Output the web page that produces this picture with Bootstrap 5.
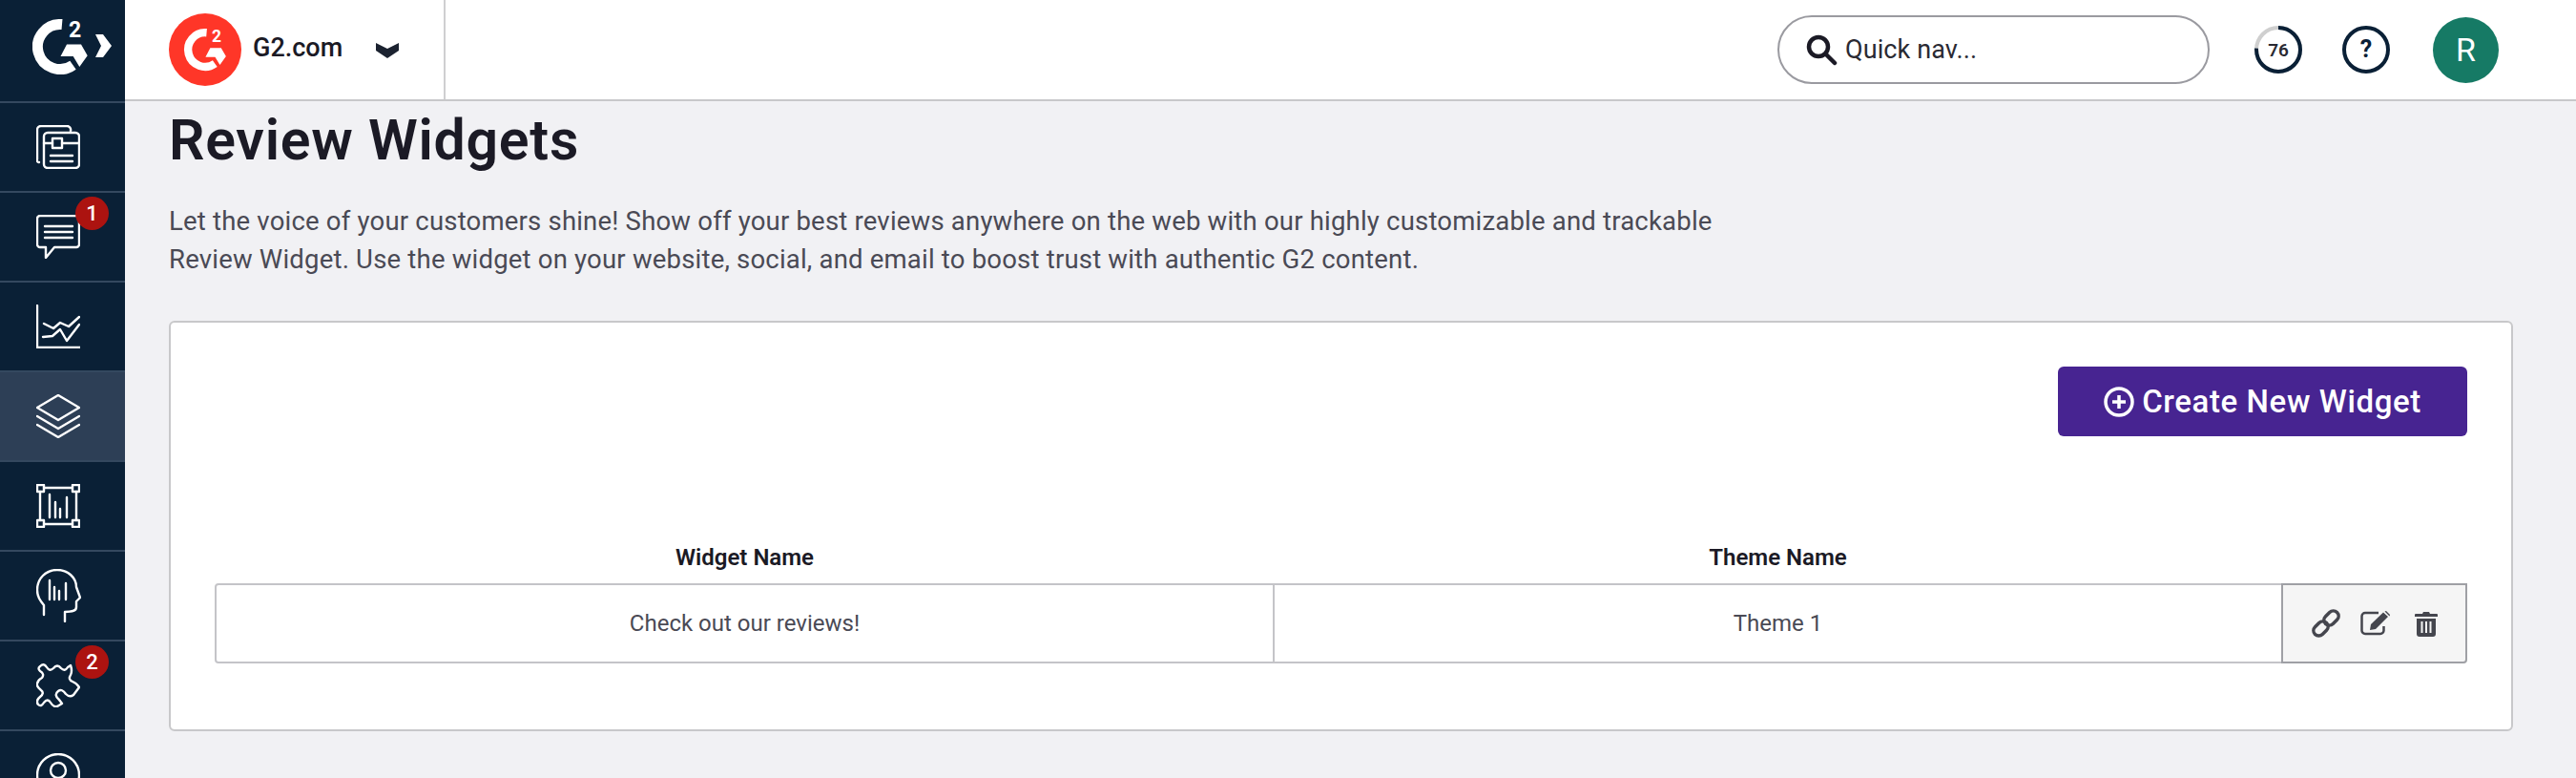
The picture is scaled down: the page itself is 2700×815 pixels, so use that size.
<!DOCTYPE html>
<html lang="en">
<head>
  <meta charset="UTF-8" />
  <meta name="viewport" content="width=device-width, initial-scale=1" />
  <title>Review Widgets</title>
  <link href="https://cdn.jsdelivr.net/npm/bootstrap@5.3.0/dist/css/bootstrap.min.css" rel="stylesheet" />
  <style>
    html, body { height: 815px; overflow: hidden; }
    body { font-family: Roboto, "Liberation Sans", sans-serif; background: #f1f1f4; color: #1b1a25; }

    .side-rail { width: 131px; background: #0a2036; flex: none; }
    .rail-top { height: 108px; flex: none; border-bottom: 2px solid #34485f; padding: 20px 0 0 34px; }
    .rail-item { height: 94px; flex: none; border-bottom: 2px solid #34485f; padding-left: 38px; }
    .rail-item.active { background: #2d3f56; }
    .rail-item svg { fill: none; stroke: #fff; stroke-width: 2.4; stroke-linecap: round; stroke-linejoin: round; display: block; }
    .rail-icon { width: 46px; }
    .rail-badge { position: absolute; width: 35px; height: 35px; left: 41px; top: -19px; border-radius: 50%; background: #ac1310; color: #fff; font-size: 22px; font-weight: 500; }
    .logo-two { position: absolute; left: 38px; top: 0; font-size: 23px; font-weight: 700; line-height: 1; color: #fff; }
    .org-logo .logo-two { left: 45px; top: 16px; font-size: 17.5px; }

    .top-head { height: 106px; background: #fff; border-bottom: 2px solid #c8c8ca; }
    .org-pick { width: 336px; height: 104px; border-right: 2px solid #cfcfd1; padding-left: 46px; }
    .org-name { font-size: 27px; font-weight: 500; margin-left: 12px; margin-bottom: 3px; width: 129px; }
    .quick-search { width: 453px; height: 72px; border: 2px solid #9a9aa0; border-radius: 36px; padding-left: 28px; }
    .quick-search input { border: 0; outline: 0; width: 340px; margin-left: 6px; font-size: 27px; letter-spacing: .1px; color: #2a2a33; background: transparent; }
    .quick-search input::placeholder { color: #2a2a33; opacity: 1; }
    .tool-ring { width: 50px; height: 50px; margin-left: 47px; }
    .tool-ring text { font-size: 19px; font-weight: 600; fill: #2a2a33; font-family: Roboto, sans-serif; }
    .tool-help { width: 50px; height: 50px; margin-left: 42px; border: 4px solid #0a2036; border-radius: 50%; font-size: 25px; font-weight: 700; color: #0a2036; }
    .tool-avatar { width: 69px; height: 69px; margin: 0 81px 0 45px; background: #167a65; color: #fff; border-radius: 50%; font-size: 34px; }

    .page-body { padding: 0 66px 0 46px; }
    .page-title { font-size: 59px; font-weight: 600; line-height: 72px; margin: 5px 0 29px; letter-spacing: .75px; color: #1b1a25; }
    .page-intro { font-size: 27.5px; line-height: 40px; letter-spacing: .2px; color: #4a4a55; margin-bottom: 44px; }
    .widget-panel { height: 430px; border: 2px solid #c8c8ca; border-radius: 6px; padding: 46px 46px 0; background: #fff; }
    .btn-create { width: 429px; height: 73px; background: #472491; color: #fff; border: 0; border-radius: 6px; font-size: 33px; font-weight: 500; letter-spacing: .6px; }
    .btn-create:hover { background: #3c1e7c; color: #fff; }
    .widget-table { margin: 99px 0 0; table-layout: fixed; width: 100%; border-collapse: separate; border-spacing: 0; }
    .widget-table th { font-size: 24px; font-weight: 600; height: 55px; padding: 0; vertical-align: middle; text-align: center; border: 0; color: #1b1a25; }
    .widget-table td { font-size: 24px; height: 84px; padding: 0; vertical-align: middle; text-align: center; color: #4a4a55; border-top: 2px solid #c4c4c8; border-bottom: 2px solid #c4c4c8; }
    .cell-first { border-left: 2px solid #c4c4c8; border-right: 2px solid #c4c4c8; border-radius: 4px 0 0 4px; }
    .widget-table td.cell-actions { background: #f5f5f5; border: 2px solid #9fa0a5; border-radius: 0 0 4px 0; }
    .action-link { color: #45464e; line-height: 0; }
  </style>
</head>
<body class="d-flex">
  <!-- Side rail -->
  <nav class="side-rail d-flex flex-column overflow-hidden">
    <div class="rail-top d-flex">
      <div class="position-relative">
        <svg width="58" height="58" viewBox="0 0 58 58" fill="#fff" class="d-block">
          <path d="M31 5.6A23.5 23.5 0 1 0 42.5 48.2" fill="none" stroke="#fff" stroke-width="11" />
          <path d="M36 26.500H51L57.700 38.300 49.300 50 42.700 39H29.500Z" />
        </svg>
        <span class="logo-two">2</span>
      </div>
      <svg width="17" height="24" viewBox="0 0 17 24" class="ms-2 mt-3"><path d="M0 0H8L17 12 8 24H0L6 12Z" fill="#fff" /></svg>
    </div>

    <div class="rail-item d-flex align-items-center">
      <div class="rail-icon position-relative">
        <svg width="46" height="46" viewBox="0 0 46 46">
          <path d="M3 39A2 2 0 0 1 1 36V5A4 4 0 0 1 5 1H32A4 4 0 0 1 36 6" />
          <rect x="8" y="8" width="37" height="37" rx="4" />
          <path d="M8 19H17M27 19H45M15 32H38M15 38H38" />
          <rect x="17" y="14" width="10" height="10" />
        </svg>
      </div>
    </div>
    <div class="rail-item d-flex align-items-center">
      <div class="rail-icon position-relative">
        <svg width="46" height="46" viewBox="0 0 46 46">
          <path d="M4 1H42A3 3 0 0 1 45 4V31A3 3 0 0 1 42 34H19L10 45V34H4A3 3 0 0 1 1 31V4A3 3 0 0 1 4 1Z" />
          <path d="M9 12H38M9 18H38M9 24H38" />
        </svg>
        <span class="rail-badge d-flex align-items-center justify-content-center">1</span>
      </div>
    </div>
    <div class="rail-item d-flex align-items-center">
      <div class="rail-icon position-relative">
        <svg width="46" height="46" viewBox="0 0 46 46">
          <path d="M1 1V45H46" />
          <path d="M8 20L18 25 25 19 34 23 45 13M7 34L17 33 25 26 32 38 45 21" />
        </svg>
      </div>
    </div>
    <div class="rail-item active d-flex align-items-center">
      <div class="rail-icon position-relative">
        <svg width="46" height="46" viewBox="0 0 46 46">
          <path d="M23 1L45 14 23 27 1 14Z" />
          <path d="M1 23L23 36 45 23M1 32L23 45 45 32" />
        </svg>
      </div>
    </div>
    <div class="rail-item d-flex align-items-center">
      <div class="rail-icon position-relative">
        <svg width="46" height="46" viewBox="0 0 46 46">
          <rect x="1" y="1" width="7" height="7" />
          <rect x="38" y="1" width="7" height="7" />
          <rect x="1" y="38" width="7" height="7" />
          <rect x="38" y="38" width="7" height="7" />
          <path d="M8 4H38M8 42H38M4 8V38M42 8V38M14 11V35M20 19V35M25 26V35M32 14V35" />
        </svg>
      </div>
    </div>
    <div class="rail-item d-flex align-items-center">
      <div class="rail-icon position-relative">
        <svg width="47" height="56" viewBox="0 0 47 56">
          <path d="M8 48V38C4 33 1 29 1 22 1 10 10 1 22 1 33 1 42 9 42 19L46 30 42 34V40C42 44 38 45 30 45V55" />
          <path d="M14 12V32M19 19V32M24 23V32M31 15V32" />
        </svg>
      </div>
    </div>
    <div class="rail-item d-flex align-items-center">
      <div class="rail-icon position-relative">
        <svg width="46" height="46" viewBox="0 0 46 46">
          <path d="M4 3Q8 -1 11 4 14 9 18 5 22 0 26 5 30 9 33 4L36 2Q38 8 36 12 33 17 38 19 43 21 45 25L39 33Q35 36 31 32 27 26 23 29 18 33 24 38L27 42 22 45Q18 46 15 41 12 36 8 41 5 46 2 43-1 39 4 35 9 31 5 28 0 24 1 21 2 17 6 15 9 11 4 8 1 5 4 3Z" />
        </svg>
        <span class="rail-badge d-flex align-items-center justify-content-center">2</span>
      </div>
    </div>
    <div class="rail-item d-flex align-items-center">
      <div class="rail-icon position-relative">
        <svg width="46" height="46" viewBox="0 0 46 46">
          <circle cx="23" cy="23" r="22" />
          <circle cx="23" cy="18" r="8" />
          <path d="M9 38C12 30 34 30 37 38" />
        </svg>
      </div>
    </div>
  </nav>

  <div class="flex-grow-1 d-flex flex-column">
    <!-- Top bar -->
    <header class="top-head d-flex align-items-center">
      <div class="org-pick d-flex align-items-center">
        <div class="org-logo position-relative">
          <svg width="76" height="76" viewBox="0 0 76 76" class="d-block">
            <circle cx="38" cy="38" r="38" fill="#ff3628" />
            <g transform="translate(16 16) scale(.76)" fill="#fff">
              <path d="M31 5.6A23.5 23.5 0 1 0 42.5 48.2" fill="none" stroke="#fff" stroke-width="11" />
              <path d="M36 26.500H51L57.700 38.300 49.300 50 42.700 39H29.500Z" />
            </g>
          </svg>
          <span class="logo-two">2</span>
        </div>
        <span class="org-name">G2.com</span>
        <svg width="24" height="17" viewBox="0 0 24 17"><path d="M0 1L12 7 24 1V9L12 17 0 9Z" fill="#1b2230" /></svg>
      </div>

      <div class="d-flex align-items-center ms-auto">
        <div class="quick-search d-flex align-items-center">
          <svg width="33" height="33" viewBox="0 0 33 33" fill="none" stroke="#1b1a25" stroke-width="4.5" stroke-linecap="round"><circle cx="13" cy="13" r="10" /><path d="M21 21L30 30" /></svg>
          <input type="text" placeholder="Quick nav..." aria-label="Quick nav" />
        </div>
        <svg class="tool-ring" viewBox="0 0 50 50">
          <circle cx="25" cy="25" r="23" fill="none" stroke="#cfcfcf" stroke-width="4" />
          <circle cx="25" cy="25" r="23" fill="none" stroke="#0a2036" stroke-width="4" pathLength="100" stroke-dasharray="76 24" transform="rotate(-90 25 25)" />
          <text x="25" y="32" text-anchor="middle">76</text>
        </svg>
        <div class="tool-help d-flex align-items-center justify-content-center">?</div>
        <div class="tool-avatar d-flex align-items-center justify-content-center">R</div>
      </div>
    </header>

    <!-- Page -->
    <main class="page-body flex-grow-1">
      <h1 class="page-title">Review Widgets</h1>
      <p class="page-intro">Let the voice of your customers shine! Show off your best reviews anywhere on the web with our highly customizable and trackable<br />Review Widget. Use the widget on your website, social, and email to boost trust with authentic G2 content.</p>

      <div class="card widget-panel">
        <div class="d-flex justify-content-end">
          <button class="btn btn-create d-flex align-items-center justify-content-center gap-2">
            <svg width="32" height="32" viewBox="0 0 32 32" fill="none" stroke="#fff" stroke-width="3.500"><circle cx="16" cy="16" r="14" /><path d="M16 9V23M9 16H23" /></svg>
            Create New Widget
          </button>
        </div>

        <table class="table widget-table">
          <thead>
            <tr>
              <th style="width:1111px">Widget Name</th>
              <th>Theme Name</th>
              <th style="width:195px"></th>
            </tr>
          </thead>
          <tbody>
            <tr>
              <td class="cell-first">Check out our reviews!</td>
              <td>Theme 1</td>
              <td class="cell-actions">
                <div class="d-flex justify-content-center align-items-center">
                  <a href="#" class="action-link" aria-label="Copy link">
                    <svg width="30" height="30" viewBox="0 0 30 30" fill="none" stroke="currentColor" stroke-width="3.500">
                      <rect x="12" y="4" width="17" height="11" rx="5.500" transform="rotate(-45 20.500 9.500)" />
                      <rect x="1" y="15" width="17" height="11" rx="5.500" transform="rotate(-45 9.500 20.500)" />
                    </svg>
                  </a>
                  <a href="#" class="action-link" style="margin-left:21px" aria-label="Edit">
                    <svg width="32" height="26" viewBox="0 0 32 26" fill="none">
                      <path d="M19 2H5A3.500 3.500 0 0 0 1.500 5.500V20.500A3.500 3.500 0 0 0 5 24H21A3.500 3.500 0 0 0 24.500 20.500V16" stroke="currentColor" stroke-width="2.500" />
                      <path d="M11 14L24 1.500 29 6 16 19 10 20Z" fill="currentColor" />
                      <path d="M25.500 0.500L27 0 31 4 30.500 5.500Z" fill="currentColor" />
                    </svg>
                  </a>
                  <a href="#" class="action-link" style="margin-left:25px" aria-label="Delete">
                    <svg width="24" height="27" viewBox="0 0 24 27">
                      <path d="M8 3L9 1H15L16 3H23A1 1 0 0 1 24 4V6H0V4A1 1 0 0 1 1 3Z" fill="currentColor" />
                      <path fill-rule="evenodd" d="M2 8H22V24A3 3 0 0 1 19 27H5A3 3 0 0 1 2 24ZM6.500 11V23H8.500V11ZM11 11V23H13V11ZM15.500 11V23H17.500V11Z" fill="currentColor" />
                    </svg>
                  </a>
                </div>
              </td>
            </tr>
          </tbody>
        </table>
      </div>
    </main>
  </div>

  <script src="https://cdn.jsdelivr.net/npm/bootstrap@5.3.0/dist/js/bootstrap.bundle.min.js"></script>
</body>
</html>
